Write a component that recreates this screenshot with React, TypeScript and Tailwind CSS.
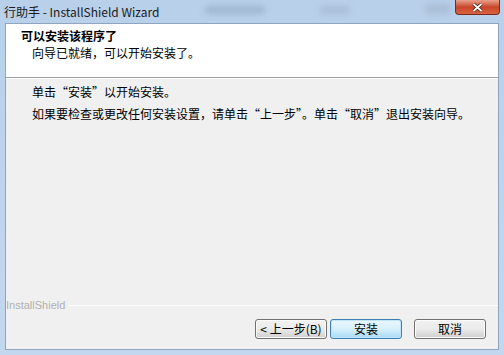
import React from "react";

const cjk = {
  fontFamily:
    '"Noto Sans CJK SC", "Liberation Sans", sans-serif',
};

function WinButton({
  label,
  primary,
}: {
  label: string;
  primary?: boolean;
}) {
  return (
    <button
      className={
        primary
          ? "h-[20px] w-[72px] rounded-[3px] border border-[#3c7fb1] bg-gradient-to-b from-[#eaf6fd] via-[#d9f0fc] to-[#a7d9f5] text-[12px] leading-none text-black shadow-[inset_0_0_0_1px_#c0e4f8]"
          : "h-[20px] w-[72px] rounded-[3px] border border-[#707070] bg-gradient-to-b from-[#f2f2f2] via-[#ebebeb] to-[#cfcfcf] text-[12px] leading-none text-black shadow-[inset_0_0_0_1px_#fcfcfc]"
      }
      style={cjk}
    >
      {label}
    </button>
  );
}

export default function App() {
  return (
    <div className="flex h-[355px] w-[504px] flex-col overflow-hidden bg-gradient-to-b from-[#b8d0ea] to-[#c3d8ee]">

      {/* title bar */}
      <div className="relative flex h-[23px] items-center pl-[4px]">
        <span
          className="text-[12px] text-[#1a1a1a]"
          style={{
            fontFamily:
              '"Noto Sans CJK SC", "Open Sans", sans-serif',
          }}
        >
          行助手 - InstallShield Wizard
        </span>

        <div className="absolute left-[205px] top-[6px] h-[8px] w-[60px] rounded bg-[#9fb6cf] blur-[3px]" />
        <div className="absolute left-[320px] top-[6px] h-[8px] w-[30px] rounded bg-[#a9bed6] blur-[3px]" />
        <div className="absolute left-[425px] top-[4px] h-[10px] w-[26px] rounded bg-[#a9bed6] blur-[3px]" />

        <div className="absolute left-[455px] top-0 flex h-[15px] w-[45px] items-center justify-center rounded-b-[4px] border border-t-0 border-[#7a2a1f] bg-gradient-to-b from-[#e8a08c] via-[#c8452b] to-[#d9633f]">
          <svg width="11" height="9" viewBox="0 0 11 9">
            <path
              d="M1.5 1 L9.5 8 M9.5 1 L1.5 8"
              stroke="#3a1410"
              strokeWidth="3.2"
            />
            <path
              d="M1.5 1 L9.5 8 M9.5 1 L1.5 8"
              stroke="#ffffff"
              strokeWidth="1.8"
            />
          </svg>
        </div>
      </div>

      {/* window body */}
      <div className="mx-[5px] flex flex-1 flex-col border border-[#8ea5bf] bg-[#f0f0f0]">

        <div className="flex h-[54px] flex-col gap-[2px] border-b border-[#a0a0a0] bg-white pl-[15px] pt-[4px] shadow-[0_1px_0_#ffffff]">
          <div
            className="text-[12px] font-bold leading-[15px] text-black"
            style={cjk}
          >
            可以安装该程序了
          </div>
          <div
            className="pl-[11px] text-[12px] leading-[15px] text-black"
            style={cjk}
          >
            向导已就绪，可以开始安装了。
          </div>
        </div>

        <div
          className="flex flex-col gap-[7px] pl-[26px] pt-[6px] text-[12px] leading-[15px] text-black"
          style={cjk}
        >
          <p>单击“安装”以开始安装。</p>
          <p>
            如果要检查或更改任何安装设置，请单击“上一步”。单击“取消”退出安装向导。
          </p>
        </div>

        <div className="flex-1" />

        <div className="flex items-center gap-[4px]">
          <span
            className="text-[11px] leading-none text-[#b0b0b0]"
            style={{
              fontFamily:
                '"Liberation Sans", sans-serif',
            }}
          >
            InstallShield
          </span>
          <div className="h-px flex-1 border-b border-white bg-[#a0a0a0]" />
        </div>

        <div className="flex justify-end pb-[10px] pr-[12px] pt-[8px]">
          <WinButton label="< 上一步(B)" />
          <div className="w-[3px]" />
          <WinButton label="安装" primary />
          <div className="w-[12px]" />
          <WinButton label="取消" />
        </div>

      </div>

      <div className="h-[5px]" />
    </div>
  );
}
